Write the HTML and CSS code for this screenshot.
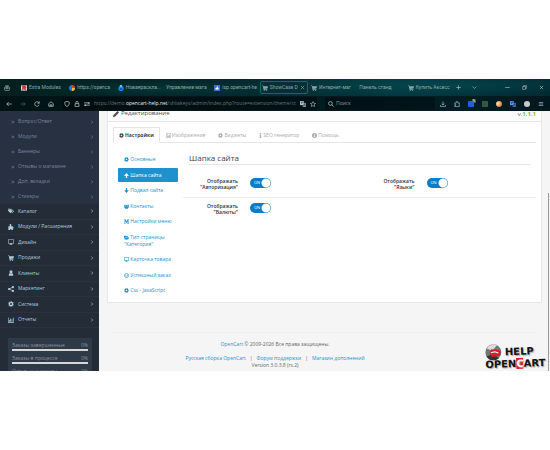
FILE: index.html
```html
<!DOCTYPE html>
<html lang="ru">
<head>
  <meta charset="UTF-8" />
  <meta name="viewport" content="width=device-width, initial-scale=1.0"/>
  <title>ShowCase</title>
  <link rel="stylesheet" href="styles.css">
</head>
<body>

  <svg class="sprite" aria-hidden="true">
    <symbol id="cog" viewBox="0 0 16 16"><g fill="none" stroke="currentColor"><circle cx="8" cy="8" r="4.300" stroke-width="3.500"/><circle cx="8" cy="8" r="7" stroke-width="2.200" stroke-dasharray="2.750" stroke-dashoffset="1.400"/></g></symbol>
    <symbol id="cart" viewBox="0 0 16 16"><path d="M0 1h3l.7 2H16l-1.500 6.500-9 1 .3 1H14v1.500H4.500L2 2.500H0z"/><circle cx="6" cy="14.500" r="1.500"/><circle cx="12.500" cy="14.500" r="1.500"/></symbol>
    <symbol id="tags" viewBox="0 0 16 16"><path fill-rule="evenodd" d="M0 2h6l6 6.500-5 5.500L0 7.500zM3 3.500A1.300 1.300 0 103 6a1.300 1.300 0 000-2.500z"/><path d="M7.500 2H9l7 6.500-5.500 5.500-1-1L13.500 8.500z"/></symbol>
    <symbol id="puzzle" viewBox="0 0 16 16"><path d="M1 6h4.500C3 2 4.500 0 6.500 0S10 2 8.500 6H13v3c3-1 3 4 0 3v4H9c1-3.500-4-3.500-3 0H1z"/></symbol>
    <symbol id="monitor" viewBox="0 0 16 16"><path fill-rule="evenodd" d="M0 1h16v11H10v2h2v1H4v-1h2v-2H0zm1.500 1.500v8h13v-8z"/></symbol>
    <symbol id="user" viewBox="0 0 16 16"><circle cx="8" cy="4.500" r="4"/><path d="M2 15c0-5 2-6.500 4-6.500h4c2 0 4 1.500 4 6.500z"/></symbol>
    <symbol id="users" viewBox="0 0 16 16"><circle cx="3" cy="4" r="2.500"/><circle cx="13" cy="4" r="2.500"/><circle cx="8" cy="6" r="3.200"/><path d="M0 11V7h5l1 3-3 2zM16 11V7h-5l-1 3 3 2zM3 15.500c0-5 2-6 5-6s5 1 5 6z"/></symbol>
    <symbol id="share" viewBox="0 0 16 16"><circle cx="3" cy="8" r="3"/><circle cx="13" cy="3" r="3"/><circle cx="13" cy="13" r="3"/><path d="M3 8l10-5M3 8l10 5" stroke="currentColor" stroke-width="2"/></symbol>
    <symbol id="chart" viewBox="0 0 16 16"><path d="M0 1h1.500v12.500H16V15H0zM3 8h2v4.500H3zM6 4h2v8.500H6zM9.500 6h2v6.500h-2zM13 2h2v10.500h-2z"/></symbol>
    <symbol id="up" viewBox="0 0 16 16"><path d="M8 0l7 8-2 2-3-2v8H6V8l-3 2-2-2z"/></symbol>
    <symbol id="down" viewBox="0 0 16 16"><path d="M8 16l7-8-2-2-3 2V0H6v8L3 6 1 8z"/></symbol>
    <symbol id="medium" viewBox="0 0 16 16"><path d="M0 1h4.500L8 8l3.500-7H16l-1.500 2v10l1.500 2h-6l1.500-2V6L8 13.500 4 6v7l2 2H0l2-2V3z"/></symbol>
    <symbol id="folder" viewBox="0 0 16 16"><path d="M0 2h6l1 2h6v3H4l-4 6z"/><path d="M4.500 8H16l-2.500 6H1z"/></symbol>
    <symbol id="image" viewBox="0 0 16 16"><path fill-rule="evenodd" d="M0 1h16v14H0zm1.500 1.500v11h13v-11z"/><circle cx="5" cy="5.500" r="1.500"/><path d="M3 12V9.500l2-1.500 2 1.500L10.500 6 13 9v3z"/></symbol>
    <symbol id="info" viewBox="0 0 8 16"><path d="M2 0h4v3.500H2zM1 5h5v9h1v2H1v-2h1V7H1z"/></symbol>
    <symbol id="info-circle" viewBox="0 0 16 16"><path fill-rule="evenodd" d="M8 0a8 8 0 100 16A8 8 0 008 0zM6.500 3h3v2.500h-3zM6 7h3.500v4.500h1V13H6v-1.500h1v-3H6z"/></symbol>
    <symbol id="check" viewBox="0 0 16 16"><g fill="none" stroke="currentColor" stroke-width="2"><circle cx="8" cy="8" r="6.500"/><path d="M4.500 8l3 3 5-6"/></g></symbol>
    <symbol id="pencil" viewBox="0 0 16 16"><path d="M0 16l1-5L12 0l4 4L5 15z"/></symbol>
    <symbol id="chevron" viewBox="0 0 16 16"><path d="M5 2l6 6-6 6" fill="none" stroke="currentColor" stroke-width="2.500"/></symbol>
    <symbol id="double" viewBox="0 0 16 16"><path d="M2 3l5 5-5 5M8 3l5 5-5 5" fill="none" stroke="currentColor" stroke-width="2.500"/></symbol>
    <symbol id="back" viewBox="0 0 16 16"><path d="M15 8H2M7 3L2 8l5 5" fill="none" stroke="currentColor" stroke-width="2"/></symbol>
    <symbol id="forward" viewBox="0 0 16 16"><path d="M1 8h13M9 3l5 5-5 5" fill="none" stroke="currentColor" stroke-width="2"/></symbol>
    <symbol id="reload" viewBox="0 0 16 16"><path d="M13.500 10A6 6 0 1113 5M14 1v5H9" fill="none" stroke="currentColor" stroke-width="2"/></symbol>
    <symbol id="home" viewBox="0 0 16 16"><path d="M2 7l6-5 6 5v7H2zM6 14v-4h4v4" fill="none" stroke="currentColor" stroke-width="2"/></symbol>
    <symbol id="shield" viewBox="0 0 16 16"><path d="M8 1l6 2c0 6-1 9-6 12C3 12 2 9 2 3z" fill="none" stroke="currentColor" stroke-width="2"/></symbol>
    <symbol id="lock" viewBox="0 0 16 16"><path d="M3 7h10v8H3zM5 7V4a3 3 0 016 0v3" fill="none" stroke="currentColor" stroke-width="2"/></symbol>
    <symbol id="toggles" viewBox="0 0 16 16"><path d="M0 5h10M6 11h10" stroke="currentColor" stroke-width="2"/><path d="M10 3h5v4h-5zM1 9h5v4H1z"/></symbol>
    <symbol id="translate" viewBox="0 0 16 16"><path d="M0 0h10v11H0z"/><path d="M7 5h9v11H7z" opacity=".7"/><path d="M2 3h6M5 2v2M3 8l4-5M9 13l2.500-6 2.500 6" fill="none" stroke="#14262b" stroke-width="1.200"/></symbol>
    <symbol id="star" viewBox="0 0 16 16"><path d="M8 1.500l2 4.500 5 .5-3.700 3.300 1.200 5L8 12.200l-4.500 2.600 1.200-5L1 6.500 6 6z" fill="none" stroke="currentColor" stroke-width="1.600"/></symbol>
    <symbol id="search" viewBox="0 0 16 16"><path d="M10 10l5 5M6.500 1.500a5 5 0 100 10 5 5 0 000-10z" fill="none" stroke="currentColor" stroke-width="2"/></symbol>
    <symbol id="download" viewBox="0 0 16 16"><path d="M8 1v9M4 7l4 4 4-4M1.500 11v4h13v-4" fill="none" stroke="currentColor" stroke-width="1.800"/></symbol>
    <symbol id="extension" viewBox="0 0 16 16"><path d="M2 5h4V3a2 2 0 014 0v2h4v10H2v-3h1.500a1.500 1.500 0 000-3H2z" fill="none" stroke="currentColor" stroke-width="1.800"/></symbol>
    <symbol id="menu" viewBox="0 0 16 16"><path d="M2 4h12M2 8h12M2 12h12" stroke="currentColor" stroke-width="1.600"/></symbol>
    <symbol id="plus" viewBox="0 0 16 16"><path d="M8 1v14M1 8h14" stroke="currentColor" stroke-width="2"/></symbol>
    <symbol id="caret" viewBox="0 0 16 16"><path d="M2 5l6 6 6-6" fill="none" stroke="currentColor" stroke-width="2"/></symbol>
    <symbol id="minus" viewBox="0 0 16 16"><path d="M1 8h14" stroke="currentColor" stroke-width="2"/></symbol>
    <symbol id="restore" viewBox="0 0 16 16"><path d="M2 5h9v9H2zM5 5V2h9v9h-3" fill="none" stroke="currentColor" stroke-width="1.800"/></symbol>
    <symbol id="close" viewBox="0 0 16 16"><path d="M3 3l10 10M13 3L3 13" stroke="currentColor" stroke-width="2"/></symbol>
    <symbol id="firefox-view" viewBox="0 0 16 16"><g fill="none" stroke="currentColor" stroke-width="1.600"><rect x="1.500" y="4.500" width="13" height="10.500" rx="3"/><path d="M3.500 2h9M5 7h6v3H5z"/></g></symbol>
    <symbol id="fav-modules" viewBox="0 0 16 16"><path fill="#d8d8d8" d="M0 1h16v14H0z"/><path fill="#d62f35" d="M2 2l8-1 5 5-3 2 2 6-7-3-5 3 2-6z"/></symbol>
    <symbol id="fav-beget" viewBox="0 0 16 16"><path fill="#1e78d2" d="M8 0a8 8 0 000 16z"/><path fill="#e33c33" d="M8 0a8 8 0 018 8H8z"/><path fill="#f2c230" d="M8 16a8 8 0 008-8H8z"/></symbol>
    <symbol id="fav-paint" viewBox="0 0 16 16"><circle cx="8" cy="9" r="7" fill="#1684e8"/><path fill="#63b9ff" d="M5 0h6v6H5z"/><path fill="#0a4fa5" d="M5 9h6v4H5z"/></symbol>
    <symbol id="fav-isp" viewBox="0 0 16 16"><path fill="#3c6fd0" d="M0 0h16v16H0z"/><path fill="#fff" d="M4 8h3V4h3v3h2v5H4z"/></symbol>
  </svg>

  <div class="browser">
    <header class="chrome">
      <div class="tab-bar">
        <button class="view" aria-label="Firefox View"><svg><use href="#firefox-view"/></svg></button>
        <nav class="tabs">
          <a href="#"><svg><use href="#fav-modules"/></svg><span>Extra Modules</span></a>
          <a href="#"><svg><use href="#fav-beget"/></svg><span>https://openca</span></a>
          <a href="#"><svg><use href="#fav-paint"/></svg><span>Новаяраскла...</span></a>
          <a href="#"><span>Управление мага</span></a>
          <a href="#"><svg><use href="#fav-isp"/></svg><span>isp.opencart-he</span></a>
          <a href="#" class="current"><svg><use href="#cart"/></svg><span>ShowCase D</span><svg class="tab-close"><use href="#close"/></svg></a>
          <a href="#"><svg><use href="#cart"/></svg><span>Интернет-маг</span></a>
          <a href="#"><span>Панель станд</span></a>
          <a href="#"><svg><use href="#cart"/></svg><span>Купить Аксесс</span></a>
        </nav>
        <div class="tab-tools">
          <button aria-label="Новая вкладка"><svg><use href="#plus"/></svg></button>
          <button aria-label="Список вкладок"><svg><use href="#caret"/></svg></button>
        </div>
        <div class="window-tools">
          <button aria-label="Свернуть"><svg><use href="#minus"/></svg></button>
          <button aria-label="Восстановить"><svg><use href="#restore"/></svg></button>
          <button aria-label="Закрыть"><svg><use href="#close"/></svg></button>
        </div>
      </div>
      <div class="nav-bar">
        <div class="nav-buttons">
          <button aria-label="Назад"><svg><use href="#back"/></svg></button>
          <button aria-label="Вперёд" class="dim"><svg><use href="#forward"/></svg></button>
          <button aria-label="Обновить"><svg><use href="#reload"/></svg></button>
          <button aria-label="Домой"><svg><use href="#home"/></svg></button>
        </div>
        <div class="address">
          <svg><use href="#shield"/></svg>
          <svg><use href="#lock"/></svg>
          <svg><use href="#toggles"/></svg>
          <span class="url">https://demo.<b>opencart-help.net</b>/shlwkeys/admin/index.php?route=extension/theme/cc</span>
          <svg><use href="#translate"/></svg>
          <svg><use href="#star"/></svg>
        </div>
        <label class="search"><svg><use href="#search"/></svg><input type="text" placeholder="Поиск" aria-label="Поиск" /></label>
        <div class="addons">
          <button aria-label="Загрузки"><svg><use href="#download"/></svg></button>
          <button aria-label="Расширения"><svg><use href="#extension"/></svg></button>
          <button aria-label="Защита" class="addon blue"><i>5</i></button>
          <button aria-label="Кэш" class="addon green"></button>
          <button aria-label="Cookie" class="addon orange"></button>
          <button aria-label="Переводчик" class="addon translate"><svg><use href="#translate"/></svg></button>
          <button aria-label="Профиль" class="addon grey"></button>
          <button aria-label="Меню"><svg><use href="#menu"/></svg></button>
        </div>
      </div>
    </header>

    <div class="page">
      <aside class="sidebar">
        <nav class="submenu">
          <a href="#"><svg><use href="#double"/></svg>Вопрос/Ответ<svg class="arrow"><use href="#chevron"/></svg></a>
          <a href="#"><svg><use href="#double"/></svg>Модули<svg class="arrow"><use href="#chevron"/></svg></a>
          <a href="#"><svg><use href="#double"/></svg>Баннеры<svg class="arrow"><use href="#chevron"/></svg></a>
          <a href="#"><svg><use href="#double"/></svg>Отзывы о магазине<svg class="arrow"><use href="#chevron"/></svg></a>
          <a href="#"><svg><use href="#double"/></svg>Доп. вкладки<svg class="arrow"><use href="#chevron"/></svg></a>
          <a href="#"><svg><use href="#double"/></svg>Стикеры<svg class="arrow"><use href="#chevron"/></svg></a>
        </nav>
        <nav class="menu">
          <a href="#"><svg><use href="#tags"/></svg>Каталог<svg class="arrow"><use href="#chevron"/></svg></a>
          <a href="#"><svg><use href="#puzzle"/></svg>Модули / Расширения<svg class="arrow"><use href="#chevron"/></svg></a>
          <a href="#"><svg><use href="#monitor"/></svg>Дизайн<svg class="arrow"><use href="#chevron"/></svg></a>
          <a href="#"><svg><use href="#cart"/></svg>Продажи<svg class="arrow"><use href="#chevron"/></svg></a>
          <a href="#"><svg><use href="#user"/></svg>Клиенты<svg class="arrow"><use href="#chevron"/></svg></a>
          <a href="#"><svg><use href="#share"/></svg>Маркетинг<svg class="arrow"><use href="#chevron"/></svg></a>
          <a href="#"><svg><use href="#cog"/></svg>Система<svg class="arrow"><use href="#chevron"/></svg></a>
          <a href="#"><svg><use href="#chart"/></svg>Отчеты<svg class="arrow"><use href="#chevron"/></svg></a>
        </nav>
        <div class="stats">
          <div class="stat"><span>Заказы завершенные</span><span>0%</span></div>
          <div class="stat"><span>Заказы в процессе</span><span>0%</span></div>
          <div class="stat"><span>Остальные заказы</span><span>0%</span></div>
        </div>
      </aside>

      <main>
        <section class="panel">
          <div class="panel-heading">
            <h3><svg><use href="#pencil"/></svg>Редактирование</h3>
            <span class="version">v.<b>1.1.1</b></span>
          </div>
          <div class="panel-body">
            <nav class="page-tabs">
              <a href="#" class="active"><svg><use href="#cog"/></svg>Настройки</a>
              <a href="#"><svg><use href="#image"/></svg>Изображения</a>
              <a href="#"><svg><use href="#cog"/></svg>Виджеты</a>
              <a href="#"><svg class="slim"><use href="#info"/></svg>SEO генератор</a>
              <a href="#"><svg><use href="#info-circle"/></svg>Помощь</a>
            </nav>
            <div class="settings">
              <nav class="pills">
                <a href="#"><svg><use href="#cog"/></svg> Основные</a>
                <a href="#" class="active"><svg><use href="#up"/></svg> Шапка сайта</a>
                <a href="#"><svg><use href="#down"/></svg> Подвал сайта</a>
                <a href="#"><svg><use href="#users"/></svg> Контакты</a>
                <a href="#"><svg><use href="#medium"/></svg> Настройки меню</a>
                <a href="#"><svg><use href="#folder"/></svg> Тип страницы<br>"Категория"</a>
                <a href="#"><svg><use href="#monitor"/></svg> Карточка товара</a>
                <a href="#"><svg><use href="#check"/></svg> Успешный заказ</a>
                <a href="#"><svg><use href="#cog"/></svg> Css - JavaScript</a>
              </nav>
              <form class="options">
                <h2>Шапка сайта</h2>
                <div class="row">
                  <label for="auth">Отображать "Авторизация"</label>
                  <span class="switch"><input type="checkbox" id="auth" checked /><span>ON</span></span>
                  <label for="lang">Отображать "Языки"</label>
                  <span class="switch"><input type="checkbox" id="lang" checked /><span>ON</span></span>
                </div>
                <div class="row">
                  <label for="currency">Отображать "Валюты"</label>
                  <span class="switch"><input type="checkbox" id="currency" checked /><span>ON</span></span>
                </div>
              </form>
            </div>
          </div>
        </section>

        <footer>
          <p><a href="#">OpenCart</a> © 2009-2026 Все права защищены.</p>
          <p class="links"><a href="#">Русская сборка OpenCart</a><span>|</span><a href="#">Форум поддержки</a><span>|</span><a href="#">Магазин дополнений</a></p>
          <p>Version 3.0.3.8 (rs.2)</p>
        </footer>
      </main>

      <a href="#" class="logo">
        <span class="logo-top">
          <svg viewBox="0 0 34 34"><circle cx="17" cy="17" r="16" fill="#777"/><path d="M4 9a16 16 0 0121-6L15 14z" fill="#ddd"/><path d="M3 25a16 16 0 0025 4L15 21z" fill="#333"/><path d="M13 11l16 2 3 4-3 8-15 1-5-7z" fill="#d9202a"/><path d="M12 18l8-2 7 3" fill="none" stroke="#fff" stroke-width="2"/></svg>
          <span>HELP</span>
        </span>
        <span>OPEN<em>C</em>ART</span>
      </a>
      <div class="scrollbar"></div>
    </div>
  </div>

</body>
</html>
```
FILE: styles.css
```css
* {
  margin: 0;
  padding: 0;
  box-sizing: border-box;
}

body {
  min-height: 100vh;
  padding: 79px 0;
  background: #fff;
  font-family: "Open Sans", "Noto Sans", sans-serif;
  font-size: 5px;
  line-height: 7px;
  color: #666;
}

a {
  color: #1e91cf;
  text-decoration: none;
}

button, input {
  border: none;
  background: none;
  font: inherit;
  color: inherit;
}

svg {
  width: 6px;
  height: 6px;
  flex: none;
  fill: currentColor;
}

.sprite {
  display: none;
}

.browser {
  display: flex;
  flex-direction: column;
  height: calc(100vh - 158px);
  overflow: hidden;
}

/* browser chrome */
.chrome {
  color: #b5c3c5;
  background:
    radial-gradient(ellipse at 78% 20%, rgba(6, 78, 84, 0.6), transparent 30%),
    radial-gradient(ellipse at 30% 30%, rgba(6, 66, 62, 0.5), transparent 25%),
    linear-gradient(90deg, #03201f, #04282d 40%, #033840 75%, #022a33);
}

.chrome button {
  display: flex;
}

.tab-bar {
  display: flex;
  align-items: center;
  height: 17px;
  padding: 0 6px 0 4px;
}

.view {
  width: 14px;
}

.tabs {
  display: grid;
  grid-template-columns: repeat(9, 1fr);
  flex: 0 1 435px;
  min-width: 0;
  font-family: Roboto, sans-serif;
}

.tabs a {
  display: flex;
  align-items: center;
  gap: 2px;
  height: 13px;
  padding-left: 3px;
  min-width: 0;
  white-space: nowrap;
  color: #8fa7a9;
}

.tabs .current {
  padding: 0 2px 0 1px;
  border: 1px solid #0d6a70;
  border-radius: 2px;
  background: #043036;
}

.tabs .tab-close {
  width: 5px;
  height: 5px;
  margin-left: auto;
}

.tab-tools, .window-tools {
  display: flex;
  align-items: center;
  gap: 11px;
}

.tab-tools {
  padding-left: 3px;
}

.tab-tools svg, .window-tools svg {
  width: 5px;
  height: 5px;
}

.window-tools {
  gap: 12px;
  margin-left: auto;
}

.nav-bar {
  display: flex;
  align-items: center;
  height: 15px;
  padding: 0 6px;
  background: rgba(0, 6, 10, 0.5);
}

.nav-buttons {
  display: flex;
  gap: 8px;
  width: 56px;
}

.dim {
  opacity: 0.4;
}

.address {
  display: flex;
  align-items: center;
  gap: 4px;
  flex: 1;
  min-width: 0;
  height: 13px;
  padding: 0 2px;
  border-radius: 2px;
  background: rgba(0, 8, 12, 0.5);
}

.url {
  flex: 1;
  white-space: nowrap;
  color: #64777b;
}

.url b {
  font-weight: 400;
  color: #e8eeee;
}

.search {
  display: flex;
  align-items: center;
  gap: 2px;
  width: 110px;
  height: 13px;
  margin: 0 5px 0 8px;
  padding-left: 3px;
  border-radius: 2px;
  background: rgba(0, 8, 12, 0.5);
}

.search input {
  width: 90px;
}

.search input::placeholder {
  color: #8d9a9c;
}

.addons {
  display: flex;
  align-items: center;
  gap: 8px;
}

.addon {
  position: relative;
  width: 6px;
  height: 6px;
  border-radius: 3px;
}

.addon i {
  position: absolute;
  top: -2px;
  right: -2px;
  width: 4px;
  height: 4px;
  border-radius: 1px;
  background: #44606a;
  font-size: 4px;
  line-height: 4px;
  font-style: normal;
  color: #fff;
}

.blue {
  border-radius: 1px;
  background: #1d5fe0;
}

.green {
  border-radius: 0;
  background: #2f5b3a;
}

.orange {
  background: radial-gradient(circle at 30% 40%, #ffe0b0, #d9824a 70%);
}

.translate {
  color: #5b8cf0;
}

.grey {
  background: #c9c9c9;
}

/* admin page */
.page {
  position: relative;
  display: flex;
  flex: 1;
  min-height: 0;
  background: #f5f5f5;
}

.sidebar {
  width: 99px;
  flex: none;
  overflow: hidden;
  background: #242d37;
}

.sidebar a {
  display: flex;
  align-items: center;
  gap: 4px;
  padding: 0 5px 0 8px;
  color: #b3cbdd;
}

.sidebar .arrow {
  width: 4px;
  height: 4px;
  margin-left: auto;
}

.submenu {
  padding-top: 3px;
  background: #283142;
}

.submenu a {
  height: 15px;
  padding-left: 11px;
  color: #76859a;
}

.submenu svg:first-child {
  width: 4px;
  height: 4px;
  margin-right: -1px;
}

.menu {
  display: grid;
  grid-auto-rows: 1fr;
  height: 124px;
}

.menu a {
  border-bottom: 1px solid #29333e;
}

.stats {
  margin: 10px 7px 0 8px;
  padding: 4px;
  background: #2e3a47;
  color: #8d9299;
}

.stat {
  display: flex;
  justify-content: space-between;
  height: 9px;
  margin-bottom: 4px;
  border-bottom: 2px solid #d4d6d8;
}

main {
  flex: 1;
  min-width: 0;
  padding: 0 8px;
}

.panel {
  border: 1px solid #e8e8e8;
  border-top: none;
  background: #fff;
}

.panel-heading {
  display: flex;
  justify-content: space-between;
  height: 11px;
  padding: 0 5px;
  border-bottom: 1px solid #e8e8e8;
  background: #fcfcfc;
}

.panel-heading h3 {
  display: flex;
  gap: 2px;
  font-size: 6px;
  line-height: 5px;
  font-weight: 400;
  color: #4c4d5a;
}

.version {
  font-size: 6px;
  line-height: 6px;
}

.version b {
  color: #7fc31c;
}

.panel-body {
  padding: 5px 5px 5px;
}

.page-tabs {
  display: flex;
  border-bottom: 1px solid #e6e6e6;
}

.page-tabs a {
  display: flex;
  align-items: center;
  gap: 1px;
  height: 16px;
  margin-bottom: -1px;
  padding: 0 7px 0 6px;
  color: #aaa;
}

.page-tabs .active {
  padding: 0 5px;
  border: 1px solid #e6e6e6;
  border-bottom-color: #fff;
  background: #fff;
  font-weight: 700;
  color: #444;
}

.page-tabs svg, .pills svg {
  width: 5px;
  height: 5px;
}

.page-tabs .slim {
  width: 3px;
}

.settings {
  display: flex;
  gap: 5px;
  padding: 9px 0 0 5px;
}

.pills {
  display: flex;
  flex-direction: column;
  justify-content: space-between;
  width: 60px;
  height: 145px;
}

.pills a {
  padding: 4px 6px 3px;
  border-radius: 1px;
  white-space: nowrap;
}

.pills svg {
  vertical-align: -1px;
}

.pills .active {
  background: #1e91cf;
  color: #fff;
}

.options {
  flex: 1;
}

.options h2 {
  height: 13px;
  margin: 0 6px;
  border-bottom: 1px solid #e6e6e6;
  font-size: 8px;
  line-height: 11px;
  font-weight: 400;
  color: #444;
}

.row {
  display: grid;
  grid-template-columns: 55px 1fr 55px 1fr;
  padding: 5px 0;
}

.options h2 + .row {
  padding: 13px 0 7px;
}

.row + .row {
  border-top: 1px solid #ececec;
}

.row label {
  padding-left: 12px;
  line-height: 6px;
  font-weight: 600;
  text-align: right;
  color: #333;
}

.switch {
  position: relative;
  width: 21px;
  height: 10px;
  margin-left: 12px;
}

.switch input {
  display: block;
  width: 21px;
  height: 10px;
  appearance: none;
  border-radius: 5px;
  background: radial-gradient(circle at 16px 5px, #fff 4px, #0a7cc8 5px);
}

.switch span {
  position: absolute;
  top: 2px;
  left: 4px;
  font-size: 4px;
  line-height: 6px;
  color: #fff;
  pointer-events: none;
}

/* centred on the whole window, sidebar included */
footer {
  margin: 29px 5px 0;
  padding: 8px 99px 0 0;
  border-top: 1px solid #eee;
  text-align: center;
}

.links {
  display: flex;
  justify-content: center;
  gap: 4px;
  padding-top: 7px;
}

/* logo and scrollbar float over the page */
.logo {
  position: absolute;
  right: 5px;
  bottom: 2px;
  font-family: "DejaVu Sans", sans-serif;
  font-size: 10px;
  line-height: 10px;
  font-weight: 700;
  color: #111;
  text-shadow: 1px 1px 1px #aaa;
  transform: rotate(-2deg);
}

.logo-top {
  display: flex;
  align-items: center;
  gap: 3px;
  height: 15px;
}

.logo svg {
  width: 17px;
  height: 17px;
}

.logo em {
  background: #e0202a;
  font-style: normal;
  color: #fff;
}

.scrollbar {
  position: absolute;
  top: 82px;
  right: 1px;
  bottom: 0;
  width: 1px;
  background: #999;
}
```
